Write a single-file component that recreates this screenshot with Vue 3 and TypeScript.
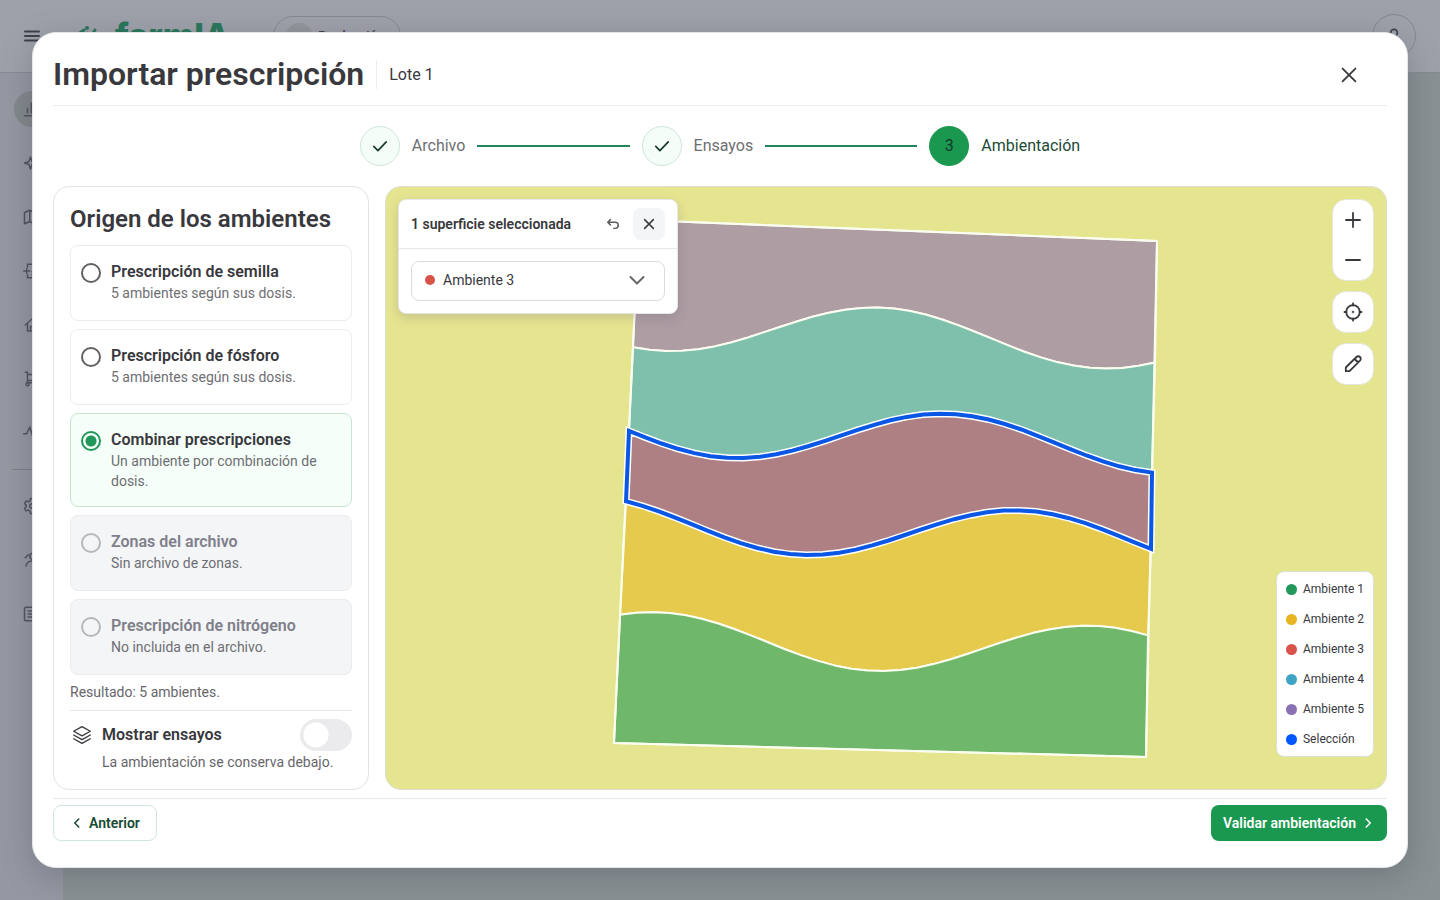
<script setup lang="ts">
import { computed, ref } from 'vue'

interface Source {
  id: string
  title: string
  hint: string
  disabled?: boolean
}

interface Zone {
  id: string
  fill: string
  path: string
}

type Point = [number, number]

const sources: Source[] = [
  { id: 'semilla', title: 'Prescripción de semilla', hint: '5 ambientes según sus dosis.' },
  { id: 'fosforo', title: 'Prescripción de fósforo', hint: '5 ambientes según sus dosis.' },
  { id: 'combinar', title: 'Combinar prescripciones', hint: 'Un ambiente por combinación de dosis.' },
  { id: 'zonas', title: 'Zonas del archivo', hint: 'Sin archivo de zonas.', disabled: true },
  { id: 'nitrogeno', title: 'Prescripción de nitrógeno', hint: 'No incluida en el archivo.', disabled: true },
]

const legend = [
  { label: 'Ambiente 1', color: '#22975a' },
  { label: 'Ambiente 2', color: '#e8b422' },
  { label: 'Ambiente 3', color: '#d9534a' },
  { label: 'Ambiente 4', color: '#3fa3c4' },
  { label: 'Ambiente 5', color: '#8a72b2' },
  { label: 'Selección', color: '#0057ff' },
]

const environments = legend.slice(0, 5).map((entry) => entry.label)

const source = ref('combinar')
const showTrials = ref(false)
const environment = ref('Ambiente 3')
const environmentColor = computed(
  () => legend.find((entry) => entry.label === environment.value)?.color ?? '#d9534a',
)

// Field outline, in map units
const topLeft: Point = [253, 33]
const topRight: Point = [771, 54]
const bottomLeft: Point = [228, 556]
const bottomRight: Point = [760, 570]

// Boundary between two zones: a sine wave over a slightly tilted base line
function wave(crest: number, base: number, slope: number, left: Point, right: Point): Point[] {
  const steps = 32
  const points: Point[] = []
  for (let i = 0; i <= steps; i++) {
    const x = left[0] + ((right[0] - left[0]) * i) / steps
    const y = base + slope * (x - crest) + 26 * Math.cos(((x - crest) * 2 * Math.PI) / 435)
    points.push([x, y])
  }
  return points
}

const boundaries: Point[][] = [
  [topLeft, topRight],
  wave(278, 138, 0.04, [247, 160], [769, 175]),
  wave(345, 245, 0.036, [243, 243], [766, 285]),
  wave(417, 342, 0.034, [240, 314], [765, 361]),
  wave(489, 458, 0.031, [234, 428], [762, 447]),
  [bottomLeft, bottomRight],
]

const fills = ['#ae9da3', '#7fc0ad', '#ae8083', '#e6ca4d', '#6eb76b']

function toPath(points: Point[]): string {
  return 'M' + points.map(([x, y]) => `${x.toFixed(1)} ${y.toFixed(1)}`).join('L') + 'Z'
}

const zones: Zone[] = fills.map((fill, i) => ({
  id: `zone-${i}`,
  fill,
  path: toPath([...boundaries[i], ...[...boundaries[i + 1]].reverse()]),
}))
const outline = toPath([topLeft, topRight, bottomRight, bottomLeft])
</script>

<template>
  <div class="shell">
    <header class="topbar">
      <svg class="burger" viewBox="0 0 16 12" aria-hidden="true"><path d="M1 1.500h14M1 6h14M1 10.500h14" /></svg>
      <svg class="logo" viewBox="0 0 32 32" aria-hidden="true">
        <path d="M5 15l7-5M13 16l2-3M18 18l5-8" /><circle cx="15" cy="8" r="2" />
      </svg>
      <span class="brand">farmIA</span>
      <span class="farm"><i class="farm-dot"></i>Producción</span>
      <span class="avatar">
        <svg viewBox="0 0 24 24" aria-hidden="true"><circle cx="12" cy="8" r="4" /><path d="M4 21c0-9 16-9 16 0" /></svg>
      </span>
    </header>
    <div class="below">
      <nav class="rail" aria-label="Secciones">
        <span class="rail-item active"><svg viewBox="0 0 24 24"><path d="M2 21h20M6 17v-6M11 17V4M16 17V9" /></svg></span>
        <span class="rail-item"><svg viewBox="0 0 24 24"><path d="M10 4l2 6 6 2-6 2-2 6-2-6-6-2 6-2z" /></svg></span>
        <span class="rail-item"><svg viewBox="0 0 24 24"><path d="M2 6l7-3 6 3 7-3v15l-7 3-6-3-7 3zM9 3v15M15 6v15" /></svg></span>
        <span class="rail-item"><svg viewBox="0 0 24 24"><path d="M6 7V3h14v18H6v-4M1 12h8M5 9v6M12 13h5M12 17h5" /></svg></span>
        <span class="rail-item"><svg viewBox="0 0 24 24"><path d="M3 12l9-8 9 8M6 10v10h12V10M10 20v-6h4" /></svg></span>
        <span class="rail-item"><svg viewBox="0 0 24 24"><path d="M3 3h3v14h14M6 6h14v8H6" /><circle cx="6" cy="19" r="2" /></svg></span>
        <span class="rail-item"><svg viewBox="0 0 24 24"><path d="M1 13h4l4-9 5 16 3-7h5" /></svg></span>
        <hr />
        <span class="rail-item"><svg viewBox="0 0 24 24"><circle cx="12" cy="12" r="3" /><path d="M10 2h4l.6 3 2.400 1.400 3-1 2 3.400L19.700 11v2l2.300 2-2 3.500-3-1-2.400 1.400L14 22h-4l-.6-3.100L7 17.500l-3 1L2 15l2.300-2v-2L2 8.800l2-3.400 3 1L9.400 5z" /></svg></span>
        <span class="rail-item"><svg viewBox="0 0 24 24"><circle cx="13" cy="7" r="4" /><path d="M4 20c1-9 17-9 18 0M3 9l4-4" /></svg></span>
        <span class="rail-item"><svg viewBox="0 0 24 24"><rect x="2" y="3" width="20" height="18" rx="2" /><path d="M7 8h10M7 12h10M7 16h10" /></svg></span>
      </nav>
      <div class="canvas"></div>
    </div>

    <div class="backdrop">
      <section class="dialog" role="dialog" aria-modal="true" aria-labelledby="dialog-title">
        <header class="dialog-head">
          <h1 id="dialog-title">Importar prescripción</h1>
          <span class="lot">Lote 1</span>
          <button class="close" type="button" aria-label="Cerrar">
            <svg viewBox="0 0 24 24"><path d="M5 5l14 14M19 5L5 19" /></svg>
          </button>
        </header>

        <ol class="stepper">
          <li class="step done">
            <span class="bullet"><svg viewBox="0 0 24 24"><path d="M4.500 12.500l5 5 10-10.500" /></svg></span>
            <span>Archivo</span>
          </li>
          <li class="bar" aria-hidden="true"></li>
          <li class="step done">
            <span class="bullet"><svg viewBox="0 0 24 24"><path d="M4.500 12.500l5 5 10-10.500" /></svg></span>
            <span>Ensayos</span>
          </li>
          <li class="bar" aria-hidden="true"></li>
          <li class="step current" aria-current="step">
            <span class="bullet">3</span>
            <span>Ambientación</span>
          </li>
        </ol>

        <div class="content">
          <aside class="panel">
            <h2>Origen de los ambientes</h2>
            <div class="sources">
              <label
                v-for="item in sources"
                :key="item.id"
                class="source"
                :class="{ selected: source === item.id, disabled: item.disabled }"
              >
                <input v-model="source" type="radio" name="source" :value="item.id" :disabled="item.disabled" />
                <span class="source-text">
                  <strong>{{ item.title }}</strong>
                  <small>{{ item.hint }}</small>
                </span>
              </label>
            </div>
            <p class="result">Resultado: 5 ambientes.</p>
            <div class="trials">
              <svg viewBox="0 0 24 24" aria-hidden="true">
                <path d="M12 2l10 5.500L12 13 2 7.500zM2 12l10 5.500L22 12M2 16.500L12 22l10-5.500" />
              </svg>
              <label for="trials">Mostrar ensayos</label>
              <input id="trials" v-model="showTrials" class="switch" type="checkbox" role="switch" />
              <p>La ambientación se conserva debajo.</p>
            </div>
          </aside>

          <div class="map">
            <svg class="field" viewBox="0 0 1000 602" role="img" aria-label="Mapa de ambientes">
              <path v-for="zone in zones" :key="zone.id" :d="zone.path" :fill="zone.fill" class="zone" />
              <path :d="outline" class="outline" />
              <path :d="zones[2].path" class="halo" />
              <path :d="zones[2].path" class="selection" />
            </svg>

            <div class="popover">
              <div class="popover-head">
                <strong>1 superficie seleccionada</strong>
                <button type="button" class="undo" aria-label="Deshacer">
                  <svg viewBox="0 0 16 16"><path d="M5 3L2 6l3 3M2 6h8.500a3.500 3.500 0 0 1 0 7H9" /></svg>
                </button>
                <button type="button" class="filled" aria-label="Quitar selección">
                  <svg viewBox="0 0 16 16"><path d="M3 3l10 10M13 3L3 13" /></svg>
                </button>
              </div>
              <div class="popover-body">
                <div class="select">
                  <i class="dot" :style="{ background: environmentColor }"></i>
                  <select v-model="environment" aria-label="Ambiente de la superficie">
                    <option v-for="name in environments" :key="name">{{ name }}</option>
                  </select>
                  <svg viewBox="0 0 16 16" aria-hidden="true"><path d="M1.500 5L8 11.500 14.500 5" /></svg>
                </div>
              </div>
            </div>

            <div class="tools">
              <div class="tool-group">
                <button type="button" aria-label="Acercar"><svg viewBox="0 0 20 20"><path d="M10 3v14M3 10h14" /></svg></button>
                <button type="button" aria-label="Alejar"><svg viewBox="0 0 20 20"><path d="M3 10h14" /></svg></button>
              </div>
              <div class="tool-group">
                <button type="button" aria-label="Centrar">
                  <svg viewBox="0 0 20 20"><circle cx="10" cy="10" r="6.800" /><circle cx="10" cy="10" r=".4" /><path d="M10 1.500v2M10 16.500v2M1.500 10h2M16.500 10h2" /></svg>
                </button>
              </div>
              <div class="tool-group">
                <button type="button" aria-label="Editar">
                  <svg viewBox="0 0 20 20"><path d="M2.800 17.200v-3.700L13.400 3a2.500 2.500 0 0 1 3.600 3.600L6.500 17.200zM12.300 4.200c0 2 1.500 3.500 3.500 3.500" /></svg>
                </button>
              </div>
            </div>

            <ul class="legend">
              <li v-for="entry in legend" :key="entry.label">
                <i class="dot" :style="{ background: entry.color }"></i>{{ entry.label }}
              </li>
            </ul>
          </div>
        </div>

        <footer class="dialog-foot">
          <button type="button" class="btn outline-btn">
            <svg viewBox="0 0 16 16"><path d="M10 3.500L5.500 8l4.500 4.500" /></svg>Anterior
          </button>
          <button type="button" class="btn primary-btn">
            Validar ambientación<svg viewBox="0 0 16 16"><path d="M6 3.500L10.500 8 6 12.500" /></svg>
          </button>
        </footer>
      </section>
    </div>
  </div>
</template>

<style>
body {
  margin: 0;
}
</style>

<style scoped>
* {
  box-sizing: border-box;
}

.shell {
  position: relative;
  display: flex;
  flex-direction: column;
  height: 100vh;
  min-height: 720px;
  overflow: hidden;
  font-family: Roboto, 'Liberation Sans', sans-serif;
  font-size: 14px;
  line-height: 20px;
  color: #38383d;
}

svg {
  fill: none;
  stroke: currentColor;
  stroke-width: 2;
  stroke-linecap: round;
  stroke-linejoin: round;
  flex: none;
}

button {
  padding: 0;
  border: 0;
  background: none;
  font: inherit;
  color: inherit;
  cursor: pointer;
}

.topbar {
  display: flex;
  align-items: center;
  height: 73px;
  flex: none;
  padding: 0 24px;
  background: #9fa1aa;
  border-bottom: 1px solid #888b93;
  color: #3e4048;
}

.burger {
  width: 16px;
  height: 12px;
}

.logo {
  width: 32px;
  height: 32px;
  margin-left: 32px;
  color: #28775a;
  stroke-width: 3;
}

.logo circle {
  fill: currentColor;
  stroke: none;
}

.brand {
  margin-left: 11px;
  font: 800 34px/40px Inter, sans-serif;
  color: #28775a;
}

.farm {
  display: flex;
  align-items: center;
  gap: 6px;
  height: 40px;
  margin-left: 43px;
  padding: 0 16px 0 12px;
  border: 1px solid #858890;
  border-radius: 20px;
  font-size: 13px;
  font-weight: 500;
}

.farm-dot {
  width: 26px;
  height: 26px;
  border-radius: 50%;
  background: #92979b;
}

.avatar {
  display: grid;
  place-items: center;
  width: 44px;
  height: 44px;
  margin-left: auto;
  border: 1px solid #858890;
  border-radius: 50%;
}

.avatar svg {
  width: 20px;
  height: 20px;
}

.below {
  display: flex;
  flex: 1;
  min-height: 0;
}

.rail {
  width: 63px;
  flex: none;
  padding: 18px 12px;
  background: #9598a2;
  color: #50535b;
}

.rail-item {
  display: grid;
  place-items: center;
  width: 36px;
  height: 36px;
  margin: 0 0 18px 2px;
  border-radius: 50%;
}

.rail-item.active {
  background: #82888b;
}

.rail-item svg {
  width: 18px;
  height: 18px;
}

.rail hr {
  height: 1px;
  margin: 2px 0 18px;
  border: 0;
  background: #7b7e87;
}

.canvas {
  flex: 1;
  background: #899192;
}

.backdrop {
  position: absolute;
  inset: 0;
  display: flex;
  padding: 32px;
}

.dialog {
  display: flex;
  flex-direction: column;
  flex: 1;
  min-width: 0;
  padding: 20px 20px 26px;
  border: 1px solid #e4e6e8;
  border-radius: 24px;
  background: #fff;
  box-shadow: 0 8px 32px rgba(60, 64, 84, 0.3);
}

.dialog-head {
  display: flex;
  align-items: center;
  height: 53px;
  padding-bottom: 8px;
  border-bottom: 1px solid #ececee;
}

.dialog-head h1 {
  margin: 0 0 2px;
  font-size: 32px;
  line-height: 40px;
  font-weight: 600;
}

.lot {
  margin-left: 12px;
  padding-left: 12px;
  border-left: 1px solid #ececee;
  font-size: 16px;
  line-height: 28px;
}

.close {
  display: grid;
  place-items: center;
  width: 40px;
  height: 40px;
  margin-left: auto;
  margin-right: 18px;
}

.close svg {
  width: 22px;
  height: 22px;
}

.stepper {
  display: flex;
  align-items: center;
  gap: 12px;
  width: 54%;
  margin: 20px auto;
  padding: 0;
  list-style: none;
  font-size: 16px;
}

.step {
  display: flex;
  align-items: center;
  gap: 12px;
  color: #6e6e73;
}

.bullet {
  display: grid;
  place-items: center;
  width: 40px;
  height: 40px;
  border: 1px solid #cfe6da;
  border-radius: 50%;
  background: #f5fdf8;
  color: #123a29;
}

.bullet svg {
  width: 20px;
  height: 20px;
}

.step.current {
  color: #1d4a35;
}

.step.current .bullet {
  border-color: #1b9850;
  background: #1b9850;
}

.bar {
  flex: 1;
  height: 2px;
  background: #23845c;
}

.content {
  display: flex;
  gap: 16px;
  flex: 1;
  min-height: 0;
}

.panel {
  width: 316px;
  flex: none;
  padding: 16px;
  border: 1px solid #e2e2e5;
  border-radius: 16px;
}

.panel h2 {
  margin: 0 0 10px;
  font-size: 24px;
  line-height: 32px;
  font-weight: 600;
}

.sources {
  display: grid;
  gap: 8px;
}

.source {
  display: flex;
  gap: 10px;
  min-height: 76px;
  padding: 15px 10px;
  border: 1px solid #ececee;
  border-radius: 8px;
}

.source input {
  appearance: none;
  flex: none;
  width: 20px;
  height: 20px;
  margin: 2px 0 0;
  border: 2px solid #626266;
  border-radius: 50%;
}

.source-text {
  flex: 1;
}

.source strong,
.source small {
  display: block;
}

.source strong {
  font-size: 16px;
  line-height: 22px;
  font-weight: 600;
}

.source small {
  font-size: 14px;
  line-height: 20px;
  color: #6e6e73;
}

.source.selected {
  border-color: #c4e6d2;
  background: #f5fef8;
}

.source.selected input {
  border-color: #22975a;
  background: radial-gradient(circle, #22975a 5px, transparent 6px);
}

.source.disabled {
  background: #f3f5f7;
}

.source.disabled strong {
  color: #80808a;
}

.source.disabled input {
  border-color: #b7b7bb;
}

.result {
  margin: 7px 0 8px;
  color: #66666b;
}

.trials {
  display: grid;
  grid-template-columns: 24px 1fr 52px;
  column-gap: 8px;
  align-items: center;
  padding-top: 8px;
  border-top: 1px solid #e6e6e9;
}

.trials svg {
  width: 20px;
  height: 20px;
  justify-self: center;
  stroke-width: 1.600;
}

.trials label {
  font-size: 16px;
  font-weight: 600;
}

.trials p {
  grid-column: 2 / 4;
  margin: 1px 0 0;
  color: #66666b;
}

.switch {
  appearance: none;
  width: 52px;
  height: 32px;
  margin: 0;
  border-radius: 16px;
  background: radial-gradient(circle at 16px 16px, #fff 12px, #ebebee 13px);
}

.switch:checked {
  background: radial-gradient(circle at 36px 16px, #fff 12px, #1b9850 13px);
}

.map {
  position: relative;
  flex: 1;
  min-width: 0;
  border: 1px solid #dedfd4;
  border-radius: 16px;
  background: #e6e58f;
  overflow: hidden;
}

.field {
  display: block;
  width: 100%;
  height: 100%;
}

.zone {
  stroke: #fbfdf0;
  stroke-width: 2;
}

.outline {
  stroke: #fbfdf0;
  stroke-width: 2;
}

.halo {
  stroke: #fff;
  stroke-width: 7;
  stroke-linejoin: miter;
}

.selection {
  stroke: #0a57e6;
  stroke-width: 4;
  stroke-linejoin: miter;
}

.popover {
  position: absolute;
  top: 12px;
  left: 12px;
  width: 280px;
  border: 1px solid #e4e6e8;
  border-radius: 8px;
  background: #fff;
  box-shadow: 0 4px 12px rgba(90, 90, 120, 0.24);
}

.popover-head {
  display: flex;
  align-items: center;
  gap: 4px;
  padding: 8px 12px;
  border-bottom: 1px solid #e6e8ea;
}

.popover-head strong {
  flex: 1;
  font-weight: 600;
}

.popover-head button {
  display: grid;
  place-items: center;
  width: 32px;
  height: 32px;
  border-radius: 8px;
}

.popover-head .undo {
  color: #5c5c61;
}

.popover-head .filled {
  background: #f3f5f7;
}

.popover-head svg {
  width: 14px;
  height: 14px;
  stroke-width: 1.700;
}

.popover-body {
  padding: 12px;
}

.select {
  position: relative;
  display: flex;
  align-items: center;
  height: 40px;
  padding: 0 0 2px 13px;
  border: 1px solid #dcdce0;
  border-radius: 8px;
}

.select .dot {
  width: 10px;
  height: 10px;
}

.select select {
  appearance: none;
  flex: 1;
  height: 36px;
  padding: 0 0 0 8px;
  border: 0;
  background: none;
  font: inherit;
  color: inherit;
}

.select svg {
  position: absolute;
  right: 19px;
  width: 16px;
  height: 16px;
  color: #66666b;
  pointer-events: none;
}

.dot {
  flex: none;
  border-radius: 50%;
}

.tools {
  position: absolute;
  top: 12px;
  right: 12px;
  display: grid;
  gap: 10px;
}

.tool-group {
  display: grid;
  width: 42px;
  border: 1px solid #e4e5dc;
  border-radius: 14px;
  background: #fff;
}

.tool-group button {
  display: grid;
  place-items: center;
  height: 40px;
}

.tool-group svg {
  width: 20px;
  height: 20px;
  stroke-width: 1.800;
}

.legend {
  position: absolute;
  right: 12px;
  bottom: 32px;
  display: grid;
  gap: 10px;
  margin: 0;
  padding: 7px 9px;
  border: 1px solid #dedfd8;
  border-radius: 8px;
  background: #fff;
  list-style: none;
  font-size: 12px;
}

.legend li {
  display: flex;
  align-items: center;
  gap: 6px;
}

.legend .dot {
  width: 11px;
  height: 11px;
}

.dialog-foot {
  display: flex;
  justify-content: space-between;
  margin-top: 8px;
  padding-top: 6px;
  border-top: 1px solid #e8e8ea;
}

.btn {
  display: flex;
  align-items: center;
  height: 36px;
  border-radius: 8px;
  font-weight: 600;
}

.btn svg {
  width: 14px;
  height: 14px;
  stroke-width: 1.800;
}

.outline-btn {
  gap: 5px;
  padding: 0 16px;
  border: 1px solid #cfe6da;
  color: #174a33;
}

.primary-btn {
  gap: 5px;
  padding: 0 12px;
  background: #1b9850;
  color: #fff;
}
</style>
